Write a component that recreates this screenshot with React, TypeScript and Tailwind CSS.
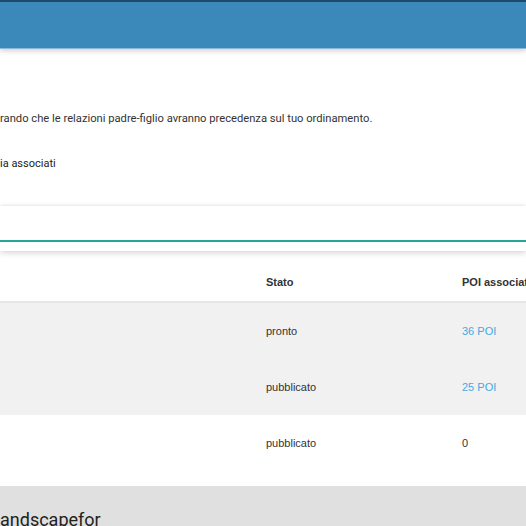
export default function App() {
  const rows = [
    { stato: 'pronto', poi: '36 POI', link: true, bg: 'bg-[#f1f1f1]' },
    { stato: 'pubblicato', poi: '25 POI', link: true, bg: 'bg-[#f1f1f1]' },
    { stato: 'pubblicato', poi: '0', link: false, bg: 'bg-white' },
  ];

  return (
    <div className="w-[526px] h-[526px] overflow-hidden bg-white text-[#333] font-['Roboto',sans-serif]">
      {/* Top bar */}
      <div className="h-[2px] bg-[#1f4c6e]" />
      <div className="h-[47px] bg-[#3b89bb] border-b border-[#8fb9d6] shadow-[0_2px_5px_rgba(0,0,0,0.18)]" />

      {/* Intro */}
      <div className="pt-[63px] text-[11.2px] leading-[14px] whitespace-nowrap">
        rando che le relazioni padre-figlio avranno precedenza sul tuo ordinamento.
      </div>
      <div className="pt-[31px] text-[11px] leading-[14px] text-[#222] whitespace-nowrap">ia associati</div>

      {/* Search card */}
      <div className="mt-[35px] h-[45px] bg-white shadow-[0_2px_6px_rgba(0,0,0,0.16),0_-1px_3px_rgba(0,0,0,0.06)] pt-[34px]">
        <div className="h-[2px] bg-[#26a69a]" />
      </div>

      {/* Table */}
      <div className="mt-[12px] font-['Liberation_Sans',Arial,sans-serif]">
        <div className="h-[40px] flex items-center text-[11px] font-bold border-b-2 border-[#e6e6e6]">
          <div className="w-[266px] shrink-0" />
          <div className="w-[196px] shrink-0">Stato</div>
          <div className="whitespace-nowrap">POI associati</div>
        </div>
        {rows.map((r, i) => (
          <div key={i} className={`h-[56px] flex items-center text-[11px] ${r.bg}`}>
            <div className="w-[266px] shrink-0" />
            <div className="w-[196px] shrink-0">{r.stato}</div>
            <div className={r.link ? 'text-[#45aae2]' : ''}>{r.poi}</div>
          </div>
        ))}
      </div>

      {/* Next section */}
      <div className="mt-[15px] h-[60px] bg-[#e0e0e0] pt-[22px] text-[18px] leading-[24px] text-[#222] whitespace-nowrap">
        andscapefor
      </div>
    </div>
  );
}
